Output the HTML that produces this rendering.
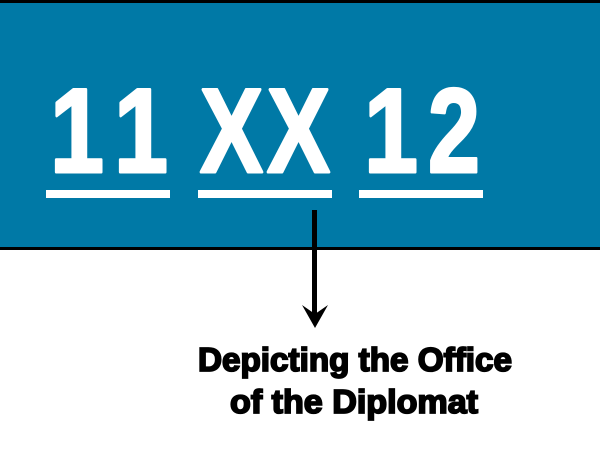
<!DOCTYPE html>
<html><head><style>html,body{margin:0;padding:0;background:#fff;width:600px;height:460px;overflow:hidden}</style></head>
<body>
<svg width="600" height="460" viewBox="0 0 600 460" xmlns="http://www.w3.org/2000/svg">
<rect x="0" y="0" width="600" height="250" fill="#0079a6"/>
<rect x="0" y="0" width="600" height="3" fill="#000"/>
<rect x="0" y="247" width="600" height="3" fill="#000"/>
<g font-family="Liberation Sans, sans-serif" font-weight="bold" fill="#fff" stroke="#fff" stroke-width="3" stroke-linejoin="round" font-size="120">
<text x="50" y="172" textLength="54" lengthAdjust="spacingAndGlyphs">1</text>
<text x="114" y="172" textLength="54" lengthAdjust="spacingAndGlyphs">1</text>
<text x="200" y="172" textLength="63" lengthAdjust="spacingAndGlyphs">X</text>
<text x="267" y="172" textLength="63" lengthAdjust="spacingAndGlyphs">X</text>
<text x="364" y="172" textLength="54" lengthAdjust="spacingAndGlyphs">1</text>
<text x="428" y="172" textLength="52" lengthAdjust="spacingAndGlyphs">2</text>
</g>
<rect x="46" y="190" width="124" height="8" fill="#fff"/>
<rect x="198" y="190" width="134" height="8" fill="#fff"/>
<rect x="359" y="190" width="124" height="8" fill="#fff"/>
<rect x="312" y="210" width="5" height="108" fill="#000"/>
<path d="M302 305 L315 328 L328 305 L315 314 Z" fill="#000"/>
<g font-family="Liberation Sans, sans-serif" font-weight="bold" fill="#000" font-size="33" stroke="#000" stroke-width="1.8">
<text x="198" y="371" textLength="314" lengthAdjust="spacingAndGlyphs">Depicting the Office</text>
<text x="230" y="413" textLength="248" lengthAdjust="spacingAndGlyphs">of the Diplomat</text>
</g>
</svg>
</body></html>
